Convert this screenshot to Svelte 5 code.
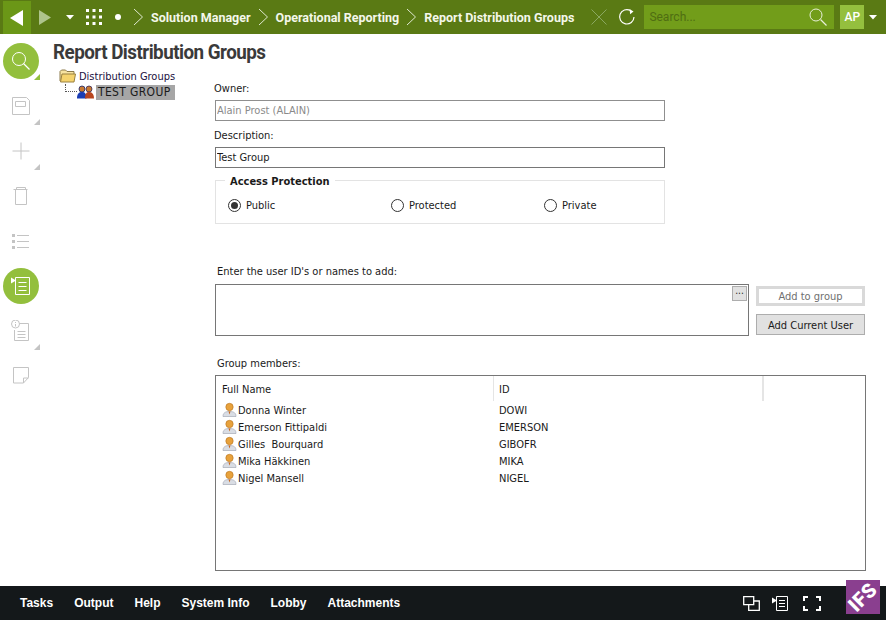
<script>
  const crumbs = ['Solution Manager', 'Operational Reporting', 'Report Distribution Groups'];
  const members = [
    ['Donna Winter', 'DOWI'],
    ['Emerson Fittipaldi', 'EMERSON'],
    ['Gilles  Bourquard', 'GIBOFR'],
    ['Mika Häkkinen', 'MIKA'],
    ['Nigel Mansell', 'NIGEL']
  ];
  const radios = [['Public', true], ['Protected', false], ['Private', false]];
  const tabs = ['Tasks', 'Output', 'Help', 'System Info', 'Lobby', 'Attachments'];
</script>

<div class="app">
  <header class="top">
    <button class="nav back" aria-label="Back"><svg width="18" height="18" viewBox="0 0 18 18"><path d="M15 1v16L2 9z" fill="#fff"/></svg></button>
    <button class="nav fwd" aria-label="Forward"><svg width="16" height="18" viewBox="0 0 16 18"><path d="M2 2v15l12-7.500z" fill="#aec48c"/></svg></button>
    <svg class="caret first" width="8" height="5" viewBox="0 0 8 5"><path d="M0 0h8L4 4.500z" fill="#fff"/></svg>
    <svg class="apps" width="16" height="16" viewBox="0 0 16 16" fill="#fff">
      {#each [0, 6.500, 13] as y}{#each [0, 6.500, 13] as x}<rect x={x} y={y} width="3" height="3"/>{/each}{/each}
    </svg>
    <span class="dot"></span>
    {#each crumbs as c}
      <svg class="chev" width="11" height="18" viewBox="0 0 11 18"><path d="M1 1l8.500 8L1 17" fill="none" stroke="#dfe8cf" stroke-width="1"/></svg>
      <span class="crumb">{c}</span>
    {/each}
    <svg class="close" width="16" height="16" viewBox="0 0 16 16"><path d="M.5.500l15 15M15.500.500l-15 15" stroke="#8aa860" stroke-width="1"/></svg>
    <svg class="refresh" width="18" height="18" viewBox="0 0 18 18"><path d="M12.500 2.600A7.200 7.200 0 1 0 16 9" fill="none" stroke="#fff" stroke-width="1.200"/><path d="M11.500 1l4 2.500-3.300 2.800z" fill="#fff"/></svg>
    <div class="search">
      <span>Search...</span>
      <svg width="18" height="18" viewBox="0 0 18 18"><circle cx="7" cy="7" r="6" fill="none" stroke="#e8efd8" stroke-width="1"/><path d="M11.500 11.500l6 6" stroke="#e8efd8" stroke-width="1.200"/></svg>
    </div>
    <div class="avatar">AP</div>
    <svg class="caret" width="8" height="5" viewBox="0 0 8 5"><path d="M0 0h8L4 4.500z" fill="#fff"/></svg>
  </header>

  <div class="middle">
    <aside class="rail">
      <div class="slot">
        <span class="disc"><svg width="20" height="20" viewBox="0 0 20 20"><circle cx="8" cy="8" r="6.500" fill="none" stroke="#fff"/><path d="M12.500 12.500l6 6" stroke="#fff" stroke-width="1.200"/></svg></span>
        <span class="tri green"></span>
      </div>
      <div class="slot">
        <svg width="20" height="20" viewBox="0 0 20 20" fill="none" stroke="#c4c4c4"><path d="M1.500 1.500h14l3 3v14h-17z"/><path d="M4.500 5.500h10v5h-10z"/></svg>
        <span class="tri"></span>
      </div>
      <div class="slot">
        <svg width="18" height="18" viewBox="0 0 18 18" stroke="#c4c4c4"><path d="M9 .5v17M.5 9h17"/></svg>
        <span class="tri"></span>
      </div>
      <div class="slot">
        <svg width="16" height="20" viewBox="0 0 16 20" fill="none" stroke="#c4c4c4"><path d="M.5 3.500h14M2.500 3.500v15h11v-15M3.500 3.500v-2h9v2"/></svg>
      </div>
      <div class="slot">
        <svg width="18" height="16" viewBox="0 0 18 16"><g fill="#c4c4c4"><rect x="0" y="1" width="3" height="3"/><rect x="0" y="7" width="3" height="3"/><rect x="0" y="13" width="3" height="3"/><rect x="5" y="2" width="12" height="1"/><rect x="5" y="8" width="12" height="1"/><rect x="5" y="14" width="12" height="1"/></g></svg>
      </div>
      <div class="slot">
        <span class="disc"><svg width="20" height="20" viewBox="0 0 20 20" fill="none" stroke="#fff"><path d="M4.500 1.500h14v17h-14z"/><path d="M7.500 6.500h8M7.500 10.500h8M7.500 14.500h8"/><path d="M0 1.500l5 3-5 3z" fill="#fff" stroke="none"/></svg></span>
      </div>
      <div class="slot">
        <svg width="20" height="22" viewBox="0 0 20 22" fill="none" stroke="#c4c4c4"><path d="M7 3.500h10.500v17h-14V10"/><path d="M6.500 11.500h8M6.500 14.500h8M6.500 17.500h8"/><circle cx="4.500" cy="4" r="4" fill="#fff"/><path d="M4.500 2v1M4.500 4v2.500"/></svg>
        <span class="tri"></span>
      </div>
      <div class="slot">
        <svg width="17" height="17" viewBox="0 0 17 17" fill="none" stroke="#c4c4c4"><path d="M.5.500h15v10l-5 5.500h-10z"/><path d="M15.500 11h-5v5"/></svg>
      </div>
    </aside>

    <main class="content">
      <h1>Report Distribution Groups</h1>
      <div class="body">
        <nav class="tree">
          <div class="node root">
            <svg width="18" height="14" viewBox="0 0 18 14"><path d="M1 12V2.500L2.500 1h4L8 2.500h7V5" fill="#f7e3a0" stroke="#8d7b4a"/><path d="M1.500 13L3 5h13.500L15 13z" fill="#f5d36e" stroke="#9a8140"/></svg>
            <span>Distribution Groups</span>
          </div>
          <div class="node leaf">
            <span class="branch"></span>
            <svg width="17" height="14" viewBox="0 0 17 14"><circle cx="5" cy="4" r="3" fill="#c97a30" stroke="#14246e" stroke-width=".8"/><circle cx="12" cy="4" r="3" fill="#c97a30" stroke="#3a2a5a" stroke-width=".8"/><path d="M0 13.500c0-5 2-6.500 5-6.500s4.500 1.500 4.500 6.500z" fill="#1a3db4"/><path d="M8 13.500c0-5 1.500-6.500 4-6.500s5 1.500 5 6.500z" fill="#b8461f"/></svg>
            <span class="sel">TEST GROUP</span>
          </div>
        </nav>

        <div class="form">
          <label class="lbl owner" for="owner">Owner:</label>
          <input id="owner" class="field disabled" value="Alain Prost (ALAIN)" disabled />
          <label class="lbl desc" for="desc">Description:</label>
          <input id="desc" class="field" value="Test Group" />

          <fieldset class="group">
            <legend>Access Protection</legend>
            <div class="radios">
              {#each radios as [name, on]}
                <label class="radio"><span class="ring" class:on></span>{name}</label>
              {/each}
            </div>
          </fieldset>

          <div class="lbl add">Enter the user ID's or names to add:</div>
          <div class="addrow">
            <div class="area"><button class="dots">...</button></div>
            <div class="btns">
              <button class="btn default">Add to group</button>
              <button class="btn">Add Current User</button>
            </div>
          </div>

          <div class="lbl members">Group members:</div>
          <div class="list">
            <div class="head">
              <span class="c1">Full Name</span>
              <span class="c2">ID</span>
              <span class="c3"></span>
            </div>
            {#each members as [name, id]}
              <div class="row">
                <span class="c1">
                  <svg width="15" height="15" viewBox="0 0 15 15"><path d="M1 14.500c0-3.500 2-5 6.500-5s6.500 1.500 6.500 5z" fill="#d9dde4" stroke="#9aa0ac" stroke-width=".6"/><circle cx="7.500" cy="5" r="3.700" fill="#e8a23c" stroke="#b5711c" stroke-width=".6"/><path d="M6.500 9.500h2l-1 3z" fill="#c9671e"/></svg>
                  <span class="nm">{name}</span>
                </span>
                <span class="c2">{id}</span>
              </div>
            {/each}
          </div>
        </div>
      </div>
    </main>
  </div>

  <footer class="bottom">
    {#each tabs as t}<span class="tab">{t}</span>{/each}
    <span class="spacer"></span>
    <svg width="17" height="15" viewBox="0 0 17 15" fill="none" stroke="#fff" stroke-width="1.300"><path d="M.7.700h10v8h-10z"/><path d="M5.700 9v5.300h10.600V5H11"/></svg>
    <svg class="ico2" width="16" height="15" viewBox="0 0 16 15" fill="none" stroke="#fff"><path d="M4.500.5h11v14h-11z"/><path d="M7 4.500h6M7 7.500h6M7 10.500h6"/><path d="M0 1.500l5 3-5 3z" fill="#fff" stroke="none"/></svg>
    <svg class="ico3" width="18" height="15" viewBox="0 0 18 15" fill="none" stroke="#fff" stroke-width="2"><path d="M1 5V1h4M13 1h4v4M17 10v4h-4M5 14H1v-4"/></svg>
    <div class="logo"><span>IFS</span></div>
  </footer>
</div>

<style>
  :global(body) { margin: 0; background: #fff; }
  .app {
    width: 886px; height: 620px; display: flex; flex-direction: column; overflow: hidden;
    font-family: "DejaVu Sans", "Open Sans", sans-serif; font-stretch: condensed; font-size: 11px; color: #1a1a1a; position: relative;
  }
  button { font: inherit; font-stretch: condensed; }

  .top { height: 34px; background: #5a7a14; display: flex; align-items: center; flex: none; }
  .nav { border: 0; padding: 0; background: none; display: flex; align-items: center; justify-content: center; }
  .back { width: 28px; height: 33px; margin: 0 0 0 3px; background: #6b9717; align-self: flex-start; margin-top: 1px; }
  .fwd { width: 18px; height: 33px; margin-left: 5px; }
  .caret.first { margin-left: 12px; }
  .apps { margin-left: 12px; }
  .dot { width: 6px; height: 6px; background: #fff; border-radius: 50%; margin-left: 13px; }
  .chev { margin-left: 7px; }
  .dot + .chev { margin-left: 12px; }
  .crumb { font: 700 12.500px Roboto, sans-serif; margin-left: 7px; white-space: nowrap; color: #f4f7ea; }
  .close { margin-left: 17px; }
  .refresh { margin-left: 11px; }
  .search {
    width: 190px; height: 24px; margin-left: 8px; background: #729d1a; display: flex; align-items: center;
    justify-content: space-between; padding: 0 7px 0 5px; box-sizing: border-box;
    font: 12px Roboto, sans-serif; color: #4f6d12;
  }
  .avatar {
    width: 24px; height: 24px; margin-left: 6px; background: #94bf3e; color: #fff; font: 500 12px/24px Roboto, sans-serif;
    text-align: center;
  }
  .top > .caret:last-child { margin-left: 5px; }

  .middle { flex: 1; display: flex; min-height: 0; }
  .rail { width: 42px; flex: none; display: flex; flex-direction: column; padding-top: 4px; box-sizing: border-box; }
  .slot { display: flex; align-items: center; justify-content: center; position: relative; height: 45px; flex: none; }
  .disc { width: 36px; height: 36px; border-radius: 50%; background: #93bf3d; display: flex; align-items: center; justify-content: center; }
  .tri { position: absolute; width: 0; height: 0; right: 2px; bottom: 3px; border-left: 6px solid transparent; border-bottom: 6px solid #c4c4c4; }
  .tri.green { border-bottom-color: #93bf3d; }

  .content { flex: 1; min-width: 0; display: flex; flex-direction: column; }
  h1 { margin: 6px 0 0 11px; font: 700 20px/24px Roboto, sans-serif; transform: scaleX(.94); transform-origin: left; letter-spacing: -.55px; color: #3a3a3a; white-space: nowrap; }
  .body { display: flex; }
  .tree { width: 172px; flex: none; padding: 4px 0 0 17px; box-sizing: border-box; }
  .node { display: flex; align-items: center; height: 16px; white-space: nowrap; color: #1a1040; }
  .node svg { flex: none; }
  .root span { margin-left: 2px; }
  .leaf { margin-left: 6px; }
  .branch { width: 12px; height: 8px; margin-top: -8px; border-left: 1px dotted #555; border-bottom: 1px dotted #555; box-sizing: border-box; }
  .sel { background: #a6a6a6; margin-left: 2px; padding: 0 2px; color: #1a1a1a; line-height: 15px; width: 79px; box-sizing: border-box; font-size: 12px; letter-spacing: .35px; }

  .form { flex: 1; min-width: 0; display: flex; flex-direction: column; padding-top: 17px; }
  .lbl { line-height: 15px; color: #1a1a1a; display: block; }
  .owner { margin: 0 0 4px; }
  .desc { margin: 7px 0 4px; }
  .field {
    width: 450px; height: 21px; box-sizing: border-box; border: 1px solid #767676; background: #fff; padding: 0 1px;
    font: inherit; font-stretch: condensed; color: #1a1a1a; margin-left: 1px; outline: 0; border-radius: 0;
  }
  .field.disabled { color: #8a8a8a; border-color: #8f8f8f; }
  .group { width: 450px; height: 44px; box-sizing: border-box; margin: 12px 0 0 1px; padding: 0; border: 1px solid #e3e3e3; position: relative; min-inline-size: 0; }
  legend { display: none; }
  .group::before { content: "Access Protection"; position: absolute; left: 9px; top: -6px; padding: 0 5px; background: #fff; font-weight: 700; color: #1a1a1a; line-height: 14px; }
  .radios { display: flex; padding: 18px 0 0 12px; }
  .radio { display: flex; align-items: center; gap: 5px; flex: none; width: 163px; line-height: 14px; }
  .radio:nth-child(2) { width: 153px; }
  .radio:nth-child(3) { width: auto; }
  .ring { width: 13px; height: 13px; margin-top: -2px; border-radius: 50%; border: 1px solid #333; box-sizing: border-box; background: #fff; display: flex; align-items: center; justify-content: center; }
  .ring.on::after { content: ""; width: 7px; height: 7px; border-radius: 50%; background: #333; }

  .add { margin: 40px 0 5px 3px; }
  .addrow { display: flex; margin-left: 1px; }
  .area { width: 534px; height: 52px; box-sizing: border-box; border: 1px solid #767676; position: relative; }
  .dots { position: absolute; right: 1px; top: 1px; width: 15px; height: 15px; padding: 0 0 5px; border: 1px solid #adadad; background: #e1e1e1; font-size: 10px; line-height: 8px; color: #222; }
  .btns { margin-left: 7px; width: 109px; display: flex; flex-direction: column; padding-top: 2px; gap: 8px; }
  .btn { height: 21px; box-sizing: border-box; border: 1px solid #adadad; background: #e1e1e1; color: #1a1a1a; padding: 2px 0 0; line-height: 15px; font-size: 11px; }
  .btn.default { height: 20px; border: 3px solid #d9d9d9; background: #fff; color: #6f6f6f; padding: 0; line-height: 13px; }

  .members { margin: 20px 0 4px 3px; }
  .list { width: 651px; height: 196px; box-sizing: border-box; margin-left: 1px; border: 1px solid #767676; }
  .head { display: flex; height: 25px; align-items: center; }
  .head .c1, .head .c2, .head .c3 { border-right: 1px solid #e5e5e5; height: 25px; line-height: 25px; box-sizing: border-box; padding-top: 1px; }
  .c1 { width: 278px; padding-left: 6px; box-sizing: border-box; display: flex; align-items: center; }
  .c2 { width: 269px; padding-left: 5px; box-sizing: border-box; }
  .row { display: flex; height: 17px; align-items: center; line-height: 17px; white-space: pre; }
  .row .c2, .nm { padding-top: 2px; }
  .nm { margin-left: 1px; }
  .row svg { flex: none; }

  .bottom { height: 34px; background: #14181a; flex: none; display: flex; align-items: center; padding-left: 20px; position: relative; color: #fff; }
  .tab { font: 700 12px "Liberation Sans", sans-serif; margin-right: 21px; color: #fff; white-space: nowrap; }
  .spacer { flex: 1; }
  .ico2 { margin-left: 12px; }
  .ico3 { margin-left: 15px; margin-right: 65px; }
  .logo { position: absolute; right: 6px; top: -6px; width: 34px; height: 34px; background: #8a3f8f; overflow: hidden; display: flex; align-items: center; justify-content: center; }
  .logo span { color: #fff; font: 900 20px/1 Roboto, sans-serif; transform: rotate(-45deg); letter-spacing: .5px; }
</style>
